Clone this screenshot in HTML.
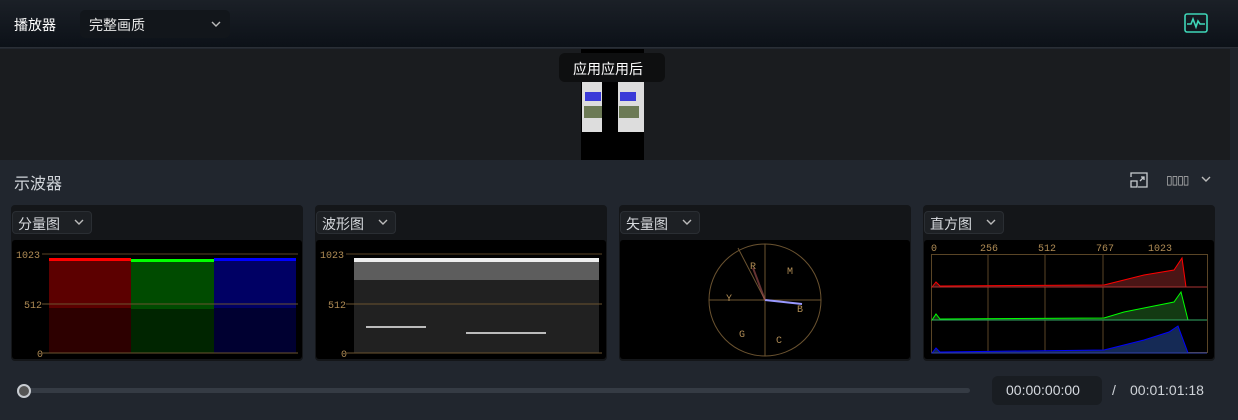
<!DOCTYPE html>
<html><head><meta charset="utf-8"><style>
*{margin:0;padding:0;box-sizing:border-box}
body{width:1238px;height:420px;overflow:hidden;background:#21262e;font-family:"Liberation Sans","Noto Sans CJK SC",sans-serif;position:relative;color:#dfe3e8}
.a{position:absolute}
.top{left:0;top:0;width:1238px;height:48px;background:linear-gradient(#1b2027,#0c1118);border-bottom:1px solid #2a2f36}
.prev{left:0;top:49px;width:1230px;height:111px;background:#1a1c1f}
.panel{top:205px;width:292px;height:156px;background:#141619;border-radius:4px}
.inner{left:1px;top:35px;width:290px;height:119px;background:#000;border-radius:3px}
.dd{left:1px;top:6px;height:23px;background:#1d2024;border:1px solid #2a2e33;border-radius:4px;font-size:14px;color:#d6d9dd;padding:2px 0 0 5px;width:80px}
.dd svg{position:absolute;right:7px;top:7px}
</style></head><body>
<div class="a top"></div>
<div class="a" style="left:14px;top:15px;font-size:14px;color:#fff">播放器</div>
<div class="a" style="left:80px;top:10px;width:150px;height:28px;background:#12161b;border-radius:5px;font-size:14px;padding:5px 0 0 9px;color:#e6e6e6">完整画质<svg class="a" style="right:9px;top:11px" width="10" height="6" viewBox="0 0 10 6"><path d="M1 1l4 4 4-4" fill="none" stroke="#bbb" stroke-width="1.4"/></svg></div>
<svg class="a" style="left:1184px;top:13px" width="24" height="20" viewBox="0 0 24 20"><rect x="1" y="1" width="22" height="18" rx="2" fill="none" stroke="#3fd6b8" stroke-width="1.6"/><path d="M3 11h4l2-5 3 8 2-6 2 3h5" fill="none" stroke="#3fd6b8" stroke-width="1.6"/></svg>
<div class="a prev"></div>
<div class="a" style="left:1230px;top:49px;width:8px;height:111px;background:#20252c"></div>
<div class="a" style="left:581px;top:49px;width:63px;height:111px;background:#000"></div>
<div class="a" style="left:582px;top:78px;width:20px;height:54px;background:#ddd"></div>
<div class="a" style="left:618px;top:78px;width:26px;height:54px;background:#ddd"></div>
<div class="a" style="left:585px;top:92px;width:16px;height:9px;background:#3a3ad8"></div>
<div class="a" style="left:620px;top:92px;width:16px;height:9px;background:#3a3ad8"></div>
<div class="a" style="left:584px;top:106px;width:18px;height:12px;background:#6c7a55"></div>
<div class="a" style="left:619px;top:106px;width:20px;height:12px;background:#6c7a55"></div>
<div class="a" style="left:559px;top:53px;width:106px;height:29px;background:#0e0f10;border-radius:6px;font-size:14px;color:#fff;padding:6px 0 0 14px">应用应用后</div>
<div class="a" style="left:14px;top:170px;font-size:16px;color:#d0d4d9">示波器</div>
<svg class="a" style="left:1130px;top:172px" width="18" height="16" viewBox="0 0 18 16"><path d="M1 5V1h16v14H8M1 9h6v6H1z M10 9l4-4M11 5h3v3" fill="none" stroke="#c8ccd0" stroke-width="1.3"/></svg>
<div class="a" style="left:1166px;top:173px;font-size:12px;color:#bbb;letter-spacing:-1px">▯▯▯▯</div>
<svg class="a" style="left:1201px;top:176px" width="10" height="6" viewBox="0 0 10 6"><path d="M1 1l4 4 4-4" fill="none" stroke="#bbb" stroke-width="1.4"/></svg>

<div class="a panel" style="left:11px"><div class="a dd">分量图<svg width="10" height="6" viewBox="0 0 10 6"><path d="M1 1l4 4 4-4" fill="none" stroke="#bbb" stroke-width="1.4"/></svg></div><div class="a inner">
<svg width="290" height="119"><line x1="30" y1="14" x2="286" y2="14" stroke="#5a4526"/>
<text x="4" y="18" fill="#b08c55" font-family="Liberation Mono" font-size="10">1023</text><text x="12" y="68" fill="#b08c55" font-family="Liberation Mono" font-size="10">512</text><text x="25" y="117" fill="#b08c55" font-family="Liberation Mono" font-size="10">0</text>
<rect x="37" y="18" width="82" height="50" fill="#c00" opacity=".45"/><rect x="37" y="68" width="82" height="45" fill="#c00" opacity=".22"/><rect x="37" y="18" width="82" height="3" fill="#f00"/>
<rect x="119" y="19" width="83" height="50" fill="#0b0" opacity=".4"/><rect x="119" y="69" width="83" height="44" fill="#0b0" opacity=".2"/><rect x="119" y="19" width="83" height="3" fill="#0f0"/>
<rect x="202" y="18" width="82" height="50" fill="#00d" opacity=".45"/><rect x="202" y="68" width="82" height="45" fill="#00d" opacity=".22"/><rect x="202" y="18" width="82" height="3" fill="#00f"/>
<line x1="30" y1="64" x2="286" y2="64" stroke="#6b5330"/><line x1="30" y1="113" x2="286" y2="113" stroke="#6b5330"/>
</svg></div></div>
<div class="a panel" style="left:315px"><div class="a dd">波形图<svg width="10" height="6" viewBox="0 0 10 6"><path d="M1 1l4 4 4-4" fill="none" stroke="#bbb" stroke-width="1.4"/></svg></div><div class="a inner">
<svg width="290" height="119"><line x1="30" y1="14" x2="286" y2="14" stroke="#5a4526"/>
<text x="4" y="18" fill="#b08c55" font-family="Liberation Mono" font-size="10">1023</text><text x="12" y="68" fill="#b08c55" font-family="Liberation Mono" font-size="10">512</text><text x="25" y="117" fill="#b08c55" font-family="Liberation Mono" font-size="10">0</text>
<rect x="38" y="18" width="245" height="4" fill="#eee"/><rect x="38" y="22" width="245" height="18" fill="#aaa" opacity=".55"/><rect x="38" y="40" width="245" height="73" fill="#777" opacity=".28"/>
<rect x="50" y="86" width="60" height="2" fill="#bbb"/><rect x="150" y="92" width="80" height="2" fill="#bbb"/>
<line x1="30" y1="64" x2="286" y2="64" stroke="#6b5330"/><line x1="30" y1="113" x2="286" y2="113" stroke="#6b5330"/>
</svg></div></div>
<div class="a panel" style="left:619px"><div class="a dd">矢量图<svg width="10" height="6" viewBox="0 0 10 6"><path d="M1 1l4 4 4-4" fill="none" stroke="#bbb" stroke-width="1.4"/></svg></div><div class="a inner">
<svg width="290" height="119"><g stroke="#6b5330" fill="none"><circle cx="145" cy="60" r="56"/><line x1="89" y1="60" x2="201" y2="60"/><line x1="145" y1="4" x2="145" y2="116"/><line x1="145" y1="60" x2="118" y2="8"/></g>
<g fill="#b08c55" font-family="Liberation Mono" font-size="10"><text x="130" y="29">R</text><text x="167" y="34">M</text><text x="106" y="61">Y</text><text x="177" y="72">B</text><text x="119" y="97">G</text><text x="156" y="103">C</text></g>
<line x1="145" y1="60" x2="182" y2="64" stroke="#99f" stroke-width="2"/><line x1="145" y1="60" x2="133" y2="28" stroke="#a55" stroke-width="2" opacity=".6"/>
</svg></div></div>
<div class="a panel" style="left:923px"><div class="a dd">直方图<svg width="10" height="6" viewBox="0 0 10 6"><path d="M1 1l4 4 4-4" fill="none" stroke="#bbb" stroke-width="1.4"/></svg></div><div class="a inner">
<svg width="290" height="119"><g fill="#b08c55" font-family="Liberation Mono" font-size="10"><text x="7" y="11">0</text><text x="56" y="11">256</text><text x="114" y="11">512</text><text x="172" y="11">767</text><text x="224" y="11">1023</text></g>
<rect x="7.5" y="14.5" width="276" height="98" fill="none" stroke="#5a4526"/>
<g stroke="#5a4526"><line x1="64" y1="15" x2="64" y2="113"/><line x1="121" y1="15" x2="121" y2="113"/><line x1="179" y1="15" x2="179" y2="113"/></g>
<path d="M8 47 L12 42 L16 46 L180 45 L200 40 L220 35 L250 30 L258 18 L262 47Z" fill="#4a1515" stroke="#f00"/><line x1="8" y1="47" x2="283" y2="47" stroke="#a33"/>
<path d="M8 80 L12 74 L16 79 L180 78 L200 72 L220 68 L250 62 L257 52 L264 80Z" fill="#133a13" stroke="#0f0"/><line x1="8" y1="80" x2="283" y2="80" stroke="#3a6"/>
<path d="M8 113 L12 108 L16 112 L180 110 L220 100 L245 92 L254 86 L264 113Z" fill="#152a55" stroke="#00f"/><line x1="8" y1="113" x2="283" y2="113" stroke="#34a"/>
</svg></div></div>

<div class="a" style="left:18px;top:388px;width:952px;height:5px;background:#353b44;border-radius:3px"></div>
<div class="a" style="left:17px;top:384px;width:14px;height:14px;border-radius:50%;background:#555;border:2px solid #c8ccd2"></div>
<div class="a" style="left:992px;top:376px;width:110px;height:29px;background:#191d22;border-radius:6px;font-size:14px;color:#d6dae0;padding:6px 0 0 14px">00:00:00:00</div>
<div class="a" style="left:1112px;top:382px;font-size:14px;color:#cfd3d8">/</div>
<div class="a" style="left:1130px;top:382px;font-size:14px;color:#cfd3d8">00:01:01:18</div>
</body></html>
